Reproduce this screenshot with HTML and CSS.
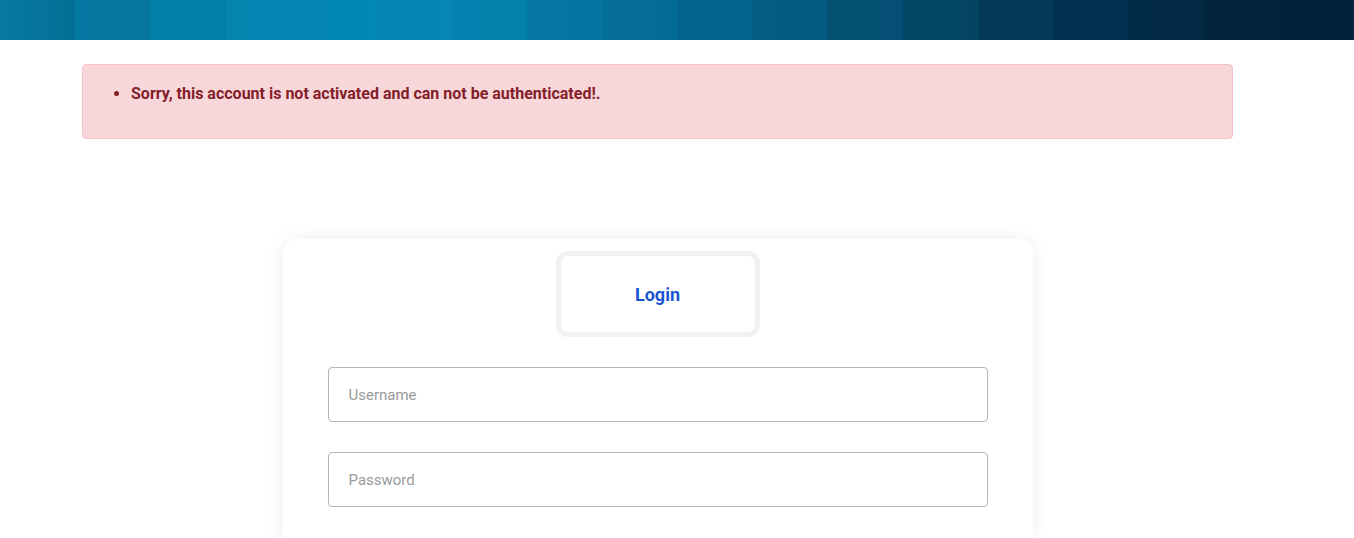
FILE: index.html
```html
<!DOCTYPE html>
<html lang="en">
<head>
<meta charset="utf-8">
<title>Login</title>
<link rel="stylesheet" href="styles.css">
</head>
<body>
<header class="topbar">
  <span class="tile t1"></span><span class="tile t2"></span><span class="tile t3"></span>
  <span class="tile t4"></span><span class="tile t5"></span><span class="tile t6"></span>
  <span class="tile t7"></span><span class="tile t8"></span><span class="tile t9"></span>
  <span class="tile t10"></span><span class="tile t11"></span><span class="tile t12"></span>
  <span class="tile t13"></span><span class="tile t14"></span><span class="tile t15"></span>
  <span class="tile t16"></span><span class="tile t17"></span><span class="tile t18"></span>
</header>
<main class="page">
  <div class="alert">
    <ul class="alert-list">
      <li>Sorry, this account is not activated and can not be authenticated!.</li>
    </ul>
  </div>
  <section class="card">
    <div class="tabs">
      <div class="tab">Login</div>
    </div>
    <form class="form">
      <input class="field" type="text" placeholder="Username">
      <input class="field" type="password" placeholder="Password">
    </form>
  </section>
</main>
</body>
</html>
```
FILE: styles.css
```css
* { box-sizing: border-box; }
html, body { margin: 0; padding: 0; background: #fff; }
body { font-family: Roboto, "Liberation Sans", Arial, sans-serif; overflow: hidden; }

.topbar { display: flex; height: 40px; }
.tile { flex: 1 1 0; height: 100%; }
.t1 { background: linear-gradient(90deg, #067aa2, #046e96); }
.t2 { background: linear-gradient(90deg, #0579a3, #0476a0); }
.t3 { background: linear-gradient(90deg, #0580a9, #037ea8); }
.t4 { background: linear-gradient(90deg, #0684b0, #0586b3); }
.t5 { background: linear-gradient(90deg, #0385b3, #0288b6); }
.t6 { background: linear-gradient(90deg, #0583b3, #0785b5); }
.t7 { background: linear-gradient(90deg, #0481ae, #0380ab); }
.t8 { background: linear-gradient(90deg, #0677a4, #0474a0); }
.t9 { background: linear-gradient(90deg, #046e99, #036c96); }
.t10 { background: linear-gradient(90deg, #03658d, #036590); }
.t11 { background: linear-gradient(90deg, #045d82, #045a7f); }
.t12 { background: linear-gradient(90deg, #045172, #044f73); }
.t13 { background: linear-gradient(90deg, #044767, #044566); }
.t14 { background: linear-gradient(90deg, #033a58, #033955); }
.t15 { background: linear-gradient(90deg, #023150, #02304e); }
.t16 { background: linear-gradient(90deg, #022b47, #022944); }
.t17 { background: #01233e; }
.t18 { background: #01223d; }

.page { width: 1315px; padding: 24px 82px 0; }

.alert {
  background: #f8d7da;
  border: 1px solid #f5c2c7;
  border-radius: 4px;
  color: #842029;
  padding: 17px 16px 16px;
}
.alert-list {
  margin: 0 0 16px;
  padding-left: 32px;
  font-size: 16px;
  line-height: 24px;
  font-weight: 700;
}

.card {
  width: 750px;
  margin: 100px auto 0;
  background: #fff;
  border-radius: 14px;
  box-shadow: 0 0 18px rgba(0, 0, 0, 0.07);
  padding: 12px 45px 40px;
}
.tabs { display: flex; justify-content: center; }
.tab {
  width: 204px;
  height: 86px;
  border: 5px solid #f1f1f1;
  border-radius: 12px;
  display: flex;
  align-items: center;
  justify-content: center;
  color: #1b55d1;
  font-weight: 700;
  font-size: 18px;
}
.form { display: flex; flex-direction: column; gap: 30px; margin-top: 30px; }
.field {
  height: 55px;
  width: 100%;
  border: 1px solid #b5b5b5;
  border-radius: 4px;
  padding: 0 20px;
  font-family: Roboto, "Liberation Sans", Arial, sans-serif;
  font-size: 15px;
  color: #333;
  outline: none;
}
.field::placeholder { color: #9a9a9a; }
```
